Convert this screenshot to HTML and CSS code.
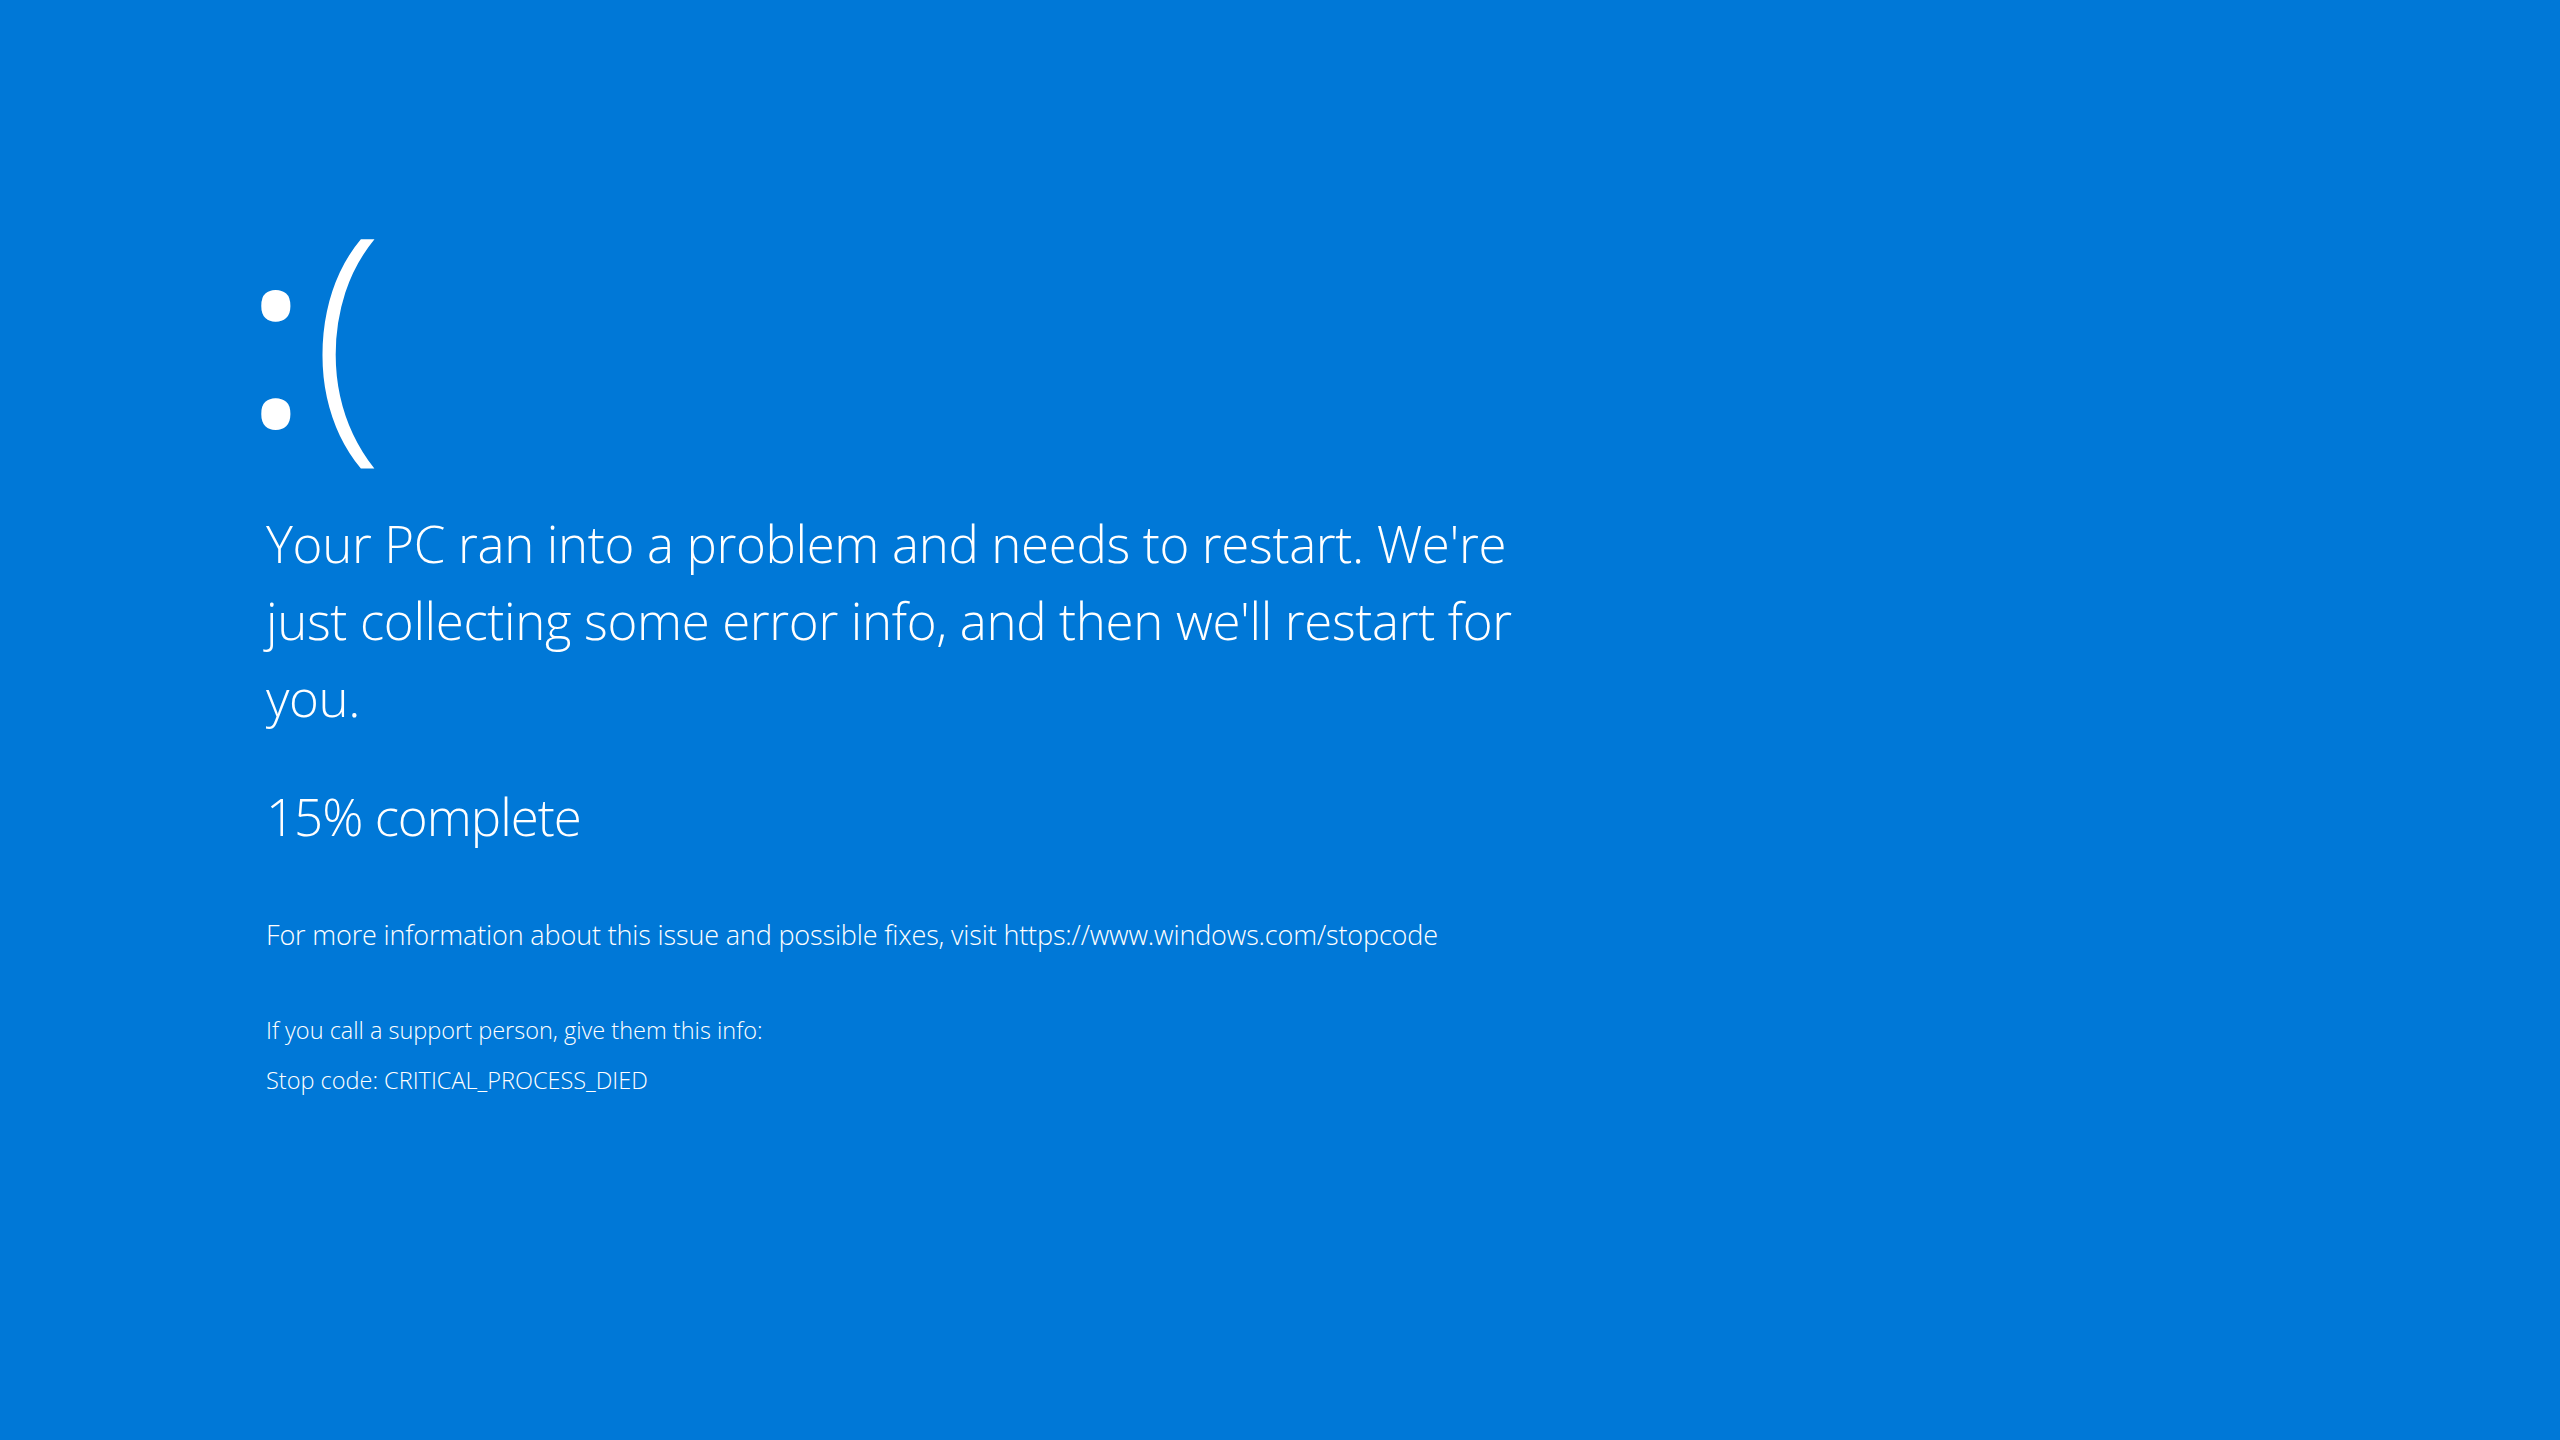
FILE: index.html
```html
<!DOCTYPE html>
<html lang="en">
<head>
<meta charset="utf-8">
<title>Your PC ran into a problem</title>
<link rel="stylesheet" href="styles.css">
</head>
<body>
<main class="screen">
  <div class="face"><span class="face-colon">:</span><span class="face-paren">(</span></div>
  <p class="message">Your PC ran into a problem and needs to restart. We're just collecting some error info, and then we'll restart for you.</p>
  <p class="progress">15% complete</p>
  <p class="info">For more information about this issue and possible fixes, visit https://www.windows.com/stopcode</p>
  <p class="support">If you call a support person, give them this info:</p>
  <p class="stopcode">Stop code: CRITICAL_PROCESS_DIED</p>
</main>
</body>
</html>
```
FILE: styles.css
```css
html, body {
  margin: 0;
  padding: 0;
  height: 100%;
}
body {
  background: #0078d7;
  color: #ffffff;
  font-family: "Open Sans", "Noto Sans", "Liberation Sans", sans-serif;
  font-weight: 300;
}
.screen {
  box-sizing: border-box;
  height: 100%;
  padding: 194px 0 0 266px;
  display: flex;
  flex-direction: column;
  align-items: flex-start;
}
.face {
  display: flex;
  align-items: flex-start;
  line-height: 1;
  height: 311px;
}
.face-colon {
  font-size: 250px;
  font-weight: 400;
  margin: 11px 0 0 -23px;
}
.face-paren {
  font-size: 263px;
  margin-left: 3px;
}
.message {
  margin: 0;
  max-width: 1290px;
  font-size: 51px;
  line-height: 77px;
  letter-spacing: -0.35px;
}
.progress {
  margin: 42px 0 0;
  font-size: 51px;
  line-height: 77px;
  letter-spacing: -1px;
}
.info {
  margin: 60px 0 0;
  font-size: 27px;
  line-height: 40px;
  letter-spacing: -0.15px;
}
.support {
  margin: 50px 0 0;
  font-size: 23.5px;
  line-height: 50px;
}
.stopcode {
  margin: 0;
  font-size: 23.5px;
  line-height: 50px;
}
```
